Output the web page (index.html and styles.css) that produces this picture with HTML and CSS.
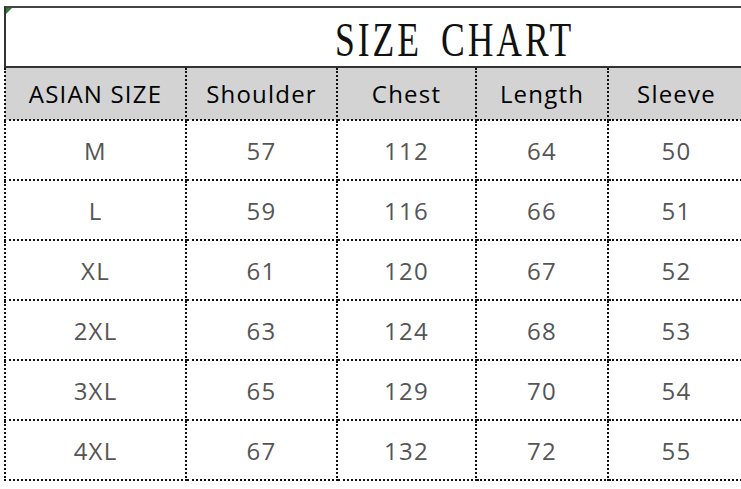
FILE: index.html
```html
<!DOCTYPE html>
<html>
<head>
<meta charset="utf-8">
<link rel="stylesheet" href="styles.css">
</head>
<body>
<div class="sheet">
  <div class="title"><span class="corner"></span><span class="title-text">SIZE CHART</span></div>
  <table class="chart">
    <colgroup>
      <col class="c1"><col class="c2"><col class="c3"><col class="c4"><col class="c5">
    </colgroup>
    <thead>
      <tr><th>ASIAN SIZE</th><th>Shoulder</th><th>Chest</th><th>Length</th><th>Sleeve</th></tr>
    </thead>
    <tbody>
      <tr><td>M</td><td>57</td><td>112</td><td>64</td><td>50</td></tr>
      <tr><td>L</td><td>59</td><td>116</td><td>66</td><td>51</td></tr>
      <tr><td>XL</td><td>61</td><td>120</td><td>67</td><td>52</td></tr>
      <tr><td>2XL</td><td>63</td><td>124</td><td>68</td><td>53</td></tr>
      <tr><td>3XL</td><td>65</td><td>129</td><td>70</td><td>54</td></tr>
      <tr><td>4XL</td><td>67</td><td>132</td><td>72</td><td>55</td></tr>
    </tbody>
  </table>
</div>
</body>
</html>
```
FILE: styles.css
```css
html, body {
  margin: 0;
  padding: 0;
  background: #fff;
  overflow: hidden;
}
.sheet {
  margin: 6px 0 0 4px;
  width: 740px;
}
.title {
  position: relative;
  border-top: 2px solid #444;
  border-left: 2px solid #333;
  border-bottom: 2px solid #333;
  box-sizing: border-box;
  height: 62px;
  display: flex;
  align-items: center;
}
.corner {
  position: absolute;
  left: 0;
  top: 0;
  width: 0;
  height: 0;
  border-top: 6px solid #2e7d32;
  border-right: 6px solid transparent;
}
.title-text {
  font-family: "Liberation Serif", serif;
  font-size: 48px;
  color: #111;
  margin-left: 329px;
  transform: scaleX(0.74);
  transform-origin: left center;
  letter-spacing: 4px;
  word-spacing: 10px;
  line-height: 1;
  padding-top: 6px;
  white-space: nowrap;
}
.chart {
  border-collapse: collapse;
  table-layout: fixed;
  width: 740px;
  font-family: "Open Sans", "Noto Sans", sans-serif;
}
.c1 { width: 181px; }
.c2 { width: 151px; }
.c3 { width: 139px; }
.c4 { width: 132px; }
.c5 { width: 137px; }
.chart th, .chart td {
  border: 2px dotted #111;
  text-align: center;
  padding: 0;
}
.chart th {
  background: #d3d3d3;
  height: 51px;
  font-size: 24px;
  font-weight: 400;
  color: #000;
  letter-spacing: 1.2px;
  border-top: none;
}
.chart td {
  height: 58px;
  font-size: 24px;
  letter-spacing: 1.2px;
  color: #555;
}
```
